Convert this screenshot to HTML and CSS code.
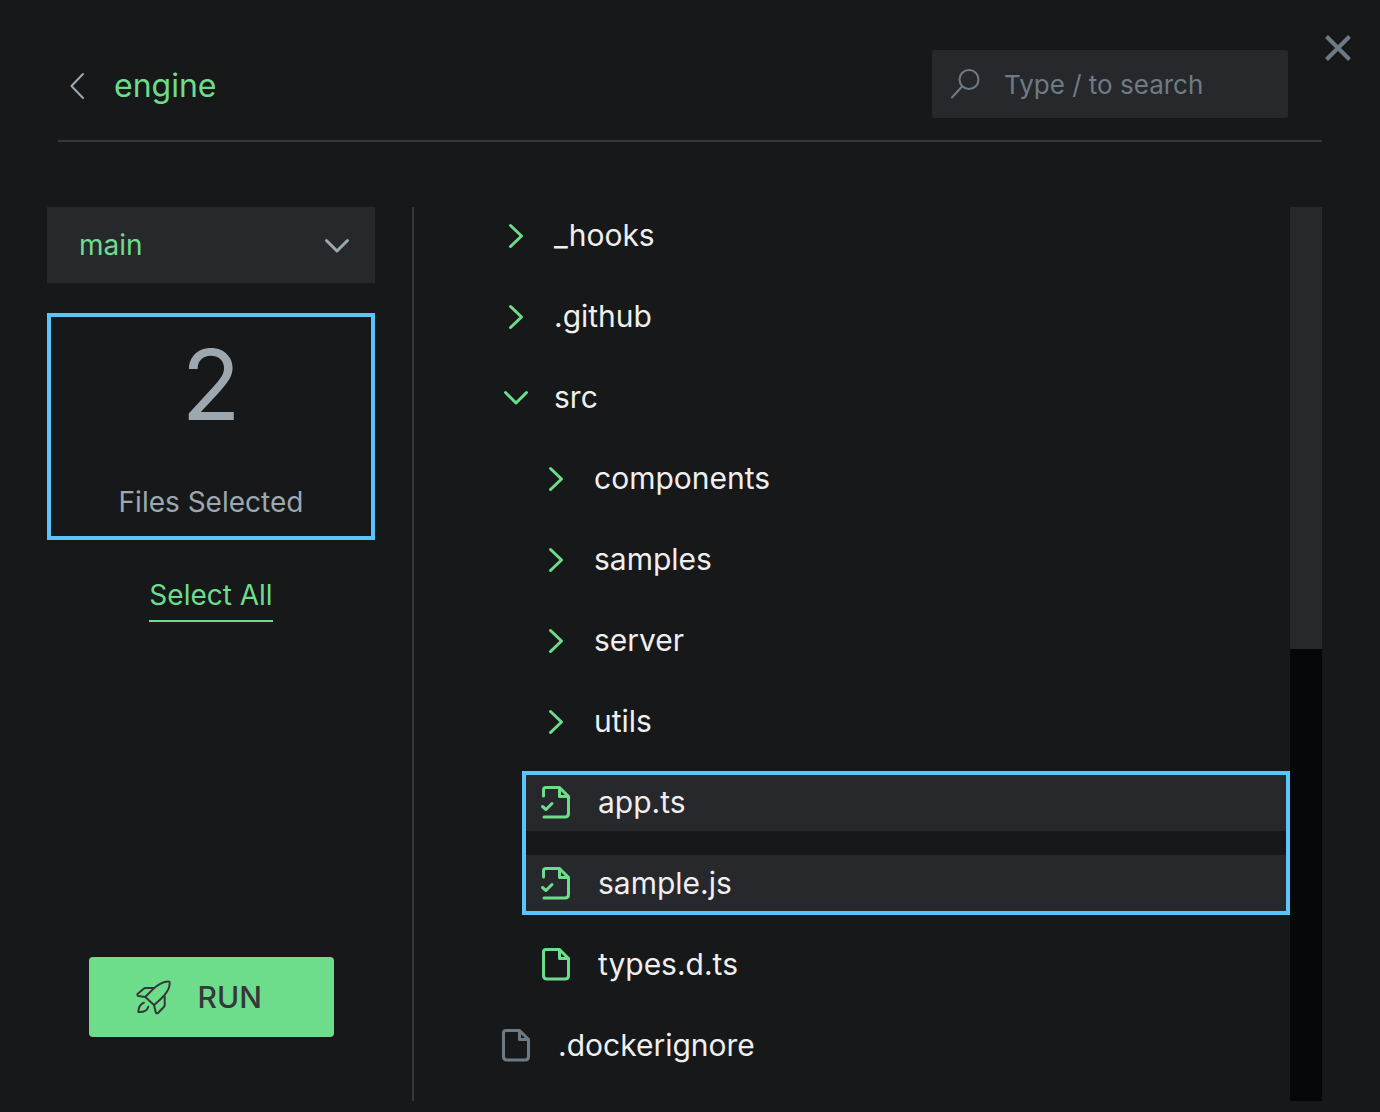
FILE: index.html
```html
<!DOCTYPE html>
<html lang="en">
<head>
<meta charset="utf-8">
<meta name="viewport" content="width=device-width, initial-scale=1">
<title>engine</title>
<link rel="stylesheet" href="styles.css">
</head>
<body>
<svg class="sprite" aria-hidden="true">
  <symbol id="right" viewBox="0 0 36 36"><path d="M12.500 8.500L23.500 19L12.500 29.500"/></symbol>
  <symbol id="down" viewBox="0 0 36 36"><path d="M7.500 13.500L18 24L28.500 13.500"/></symbol>
  <symbol id="file" viewBox="0 0 36 36"><path d="M8 3.500H21.500L30.500 12.500V29.500Q30.500 33 27 33H9Q5.500 33 5.500 29.500V6Q5.500 3.500 8 3.500Z"/><path d="M21.500 4V12.500H30.500"/></symbol>
  <symbol id="checked" viewBox="0 0 36 36"><path d="M5.500 12V6Q5.500 3.500 8 3.500H21.500L30.500 12.500V29.500Q30.500 33 27 33H6"/><path d="M21.500 4V12.500H30.500"/><path d="M4.500 22.500L8 25.500L14 19.500"/></symbol>
</svg>
<div class="dialog">
  <div class="top">
    <header class="header">
      <button class="back" aria-label="Back"><svg viewBox="0 0 36 36"><path d="M25 8L13.500 20l11.500 12"/></svg></button>
      <h1 class="title">engine</h1>
      <label class="search">
        <svg viewBox="0 0 32 32" aria-hidden="true"><circle cx="19" cy="11.500" r="9.500"/><path d="M12 18.500L2 29.500"/></svg>
        <input type="text" placeholder="Type / to search" aria-label="Search files">
      </label>
    </header>
    <button class="close" aria-label="Close"><svg viewBox="0 0 28 28"><path d="M2.500 2.500l23 23M25.500 2.500L2.500 25.500"/></svg></button>
  </div>
  <div class="body">
    <aside class="side">
      <div class="branch">
        <select aria-label="Branch"><option>main</option></select>
        <svg aria-hidden="true"><use href="#down"/></svg>
      </div>
      <div class="summary">
        <span class="count">2</span>
        <span class="caption">Files Selected</span>
      </div>
      <button class="select-all">Select All</button>
      <button class="run">
        <svg viewBox="0 0 36 36" aria-hidden="true"><path d="M9.300 18C16 11 23 3 31.500 2.500Q34 2.200 33.700 4.500C33.500 13 25 20 18 26Z"/><path d="M18 9H9.500Q8.500 9 7.700 9.700L1.500 15Q1 16.500 2.500 17L9.300 18"/><path d="M28.700 17.500V26Q28.700 27 28 27.700L22 34Q20 35 19.700 33L18 26"/><path d="M8 23.700Q2.500 26 2.300 33Q10.500 33.500 12.300 27.700"/></svg>
        <span>RUN</span>
      </button>
    </aside>
    <main class="files">
      <div class="tree">
        <button class="row"><svg><use href="#right"/></svg>_hooks</button>
        <button class="row"><svg><use href="#right"/></svg>.github</button>
        <button class="row" aria-expanded="true"><svg><use href="#down"/></svg>src</button>
        <div class="children">
          <button class="row"><svg><use href="#right"/></svg>components</button>
          <button class="row"><svg><use href="#right"/></svg>samples</button>
          <button class="row"><svg><use href="#right"/></svg>server</button>
          <button class="row"><svg><use href="#right"/></svg>utils</button>
          <div class="selection">
            <label class="row file"><input type="checkbox" checked><svg><use href="#checked"/></svg>app.ts</label>
            <label class="row file"><input type="checkbox" checked><svg><use href="#checked"/></svg>sample.js</label>
          </div>
          <label class="row file"><input type="checkbox"><svg><use href="#file"/></svg>types.d.ts</label>
        </div>
        <label class="row file muted"><input type="checkbox"><svg><use href="#file"/></svg>.dockerignore</label>
      </div>
      <div class="scrollbar" aria-hidden="true"><div class="thumb"></div></div>
    </main>
  </div>
</div>
</body>
</html>
```
FILE: styles.css
```css
:root {
  --bg: #17181a;
  --panel: #27282c;
  --green: #6ddd8b;
  --blue: #5bc4fa;
  --grey: #9da7b0;
  --dim: #6f7b84;
  --line: #363739;
}
* { box-sizing: border-box; }
body {
  margin: 0;
  background: var(--bg);
  color: #efefef;
  font-family: Inter, "Liberation Sans", sans-serif;
  font-size: 30px;
}
button, input, select {
  margin: 0;
  padding: 0;
  border: 0;
  border-radius: 0;
  background: none;
  color: inherit;
  font: inherit;
  appearance: none;
}
svg {
  flex: none;
  width: 36px;
  height: 36px;
  fill: none;
  stroke: currentColor;
  stroke-width: 3;
  stroke-linecap: round;
  stroke-linejoin: round;
}
.sprite { display: none; }
.dialog {
  display: flex;
  flex-direction: column;
  min-height: 100vh;
  padding-bottom: 11px;
}
.top { display: flex; align-items: flex-start; }
.header {
  flex: 1;
  display: flex;
  align-items: center;
  margin-left: 58px;
  padding: 50px 34px 22px 0;
  border-bottom: 2px solid var(--line);
}
.back { display: flex; color: var(--grey); }
.back svg { stroke-width: 2; }
.title {
  flex: 1;
  margin: 0;
  padding: 4px 0 0 20px;
  color: var(--green);
  font-size: 32px;
  line-height: 40px;
  font-weight: 400;
}
.search {
  display: flex;
  align-items: center;
  gap: 22px;
  width: 356px;
  height: 68px;
  padding: 0 18px;
  border-radius: 2px;
  background: var(--panel);
  color: var(--dim);
  font-size: 26px;
}
.search svg { width: 32px; height: 32px; stroke-width: 2; }
.search input { flex: 1; min-width: 0; }
.search input::placeholder { color: var(--dim); opacity: 1; }
.close {
  display: flex;
  width: 58px;
  padding: 34px 0 0 2px;
  color: var(--dim);
}
.close svg { width: 28px; height: 28px; stroke-width: 4; stroke-linecap: butt; }
.body {
  flex: 1;
  display: flex;
  margin: 65px 58px 0 47px;
}
.side {
  display: flex;
  flex-direction: column;
  align-items: center;
  width: 367px;
  padding-right: 37px;
  border-right: 2px solid var(--line);
  font-size: 28px;
}
.branch {
  display: grid;
  align-items: center;
  width: 100%;
  height: 76px;
  background: var(--panel);
  color: var(--grey);
}
.branch > * { grid-area: 1 / 1; }
.branch select { height: 100%; padding-left: 32px; color: var(--green); }
.branch svg { justify-self: end; margin-right: 20px; pointer-events: none; }
.summary {
  display: flex;
  flex-direction: column;
  align-items: center;
  justify-content: space-between;
  width: 100%;
  height: 227px;
  margin: 30px 0 34px;
  padding: 8px 0 14px;
  border: 4px solid var(--blue);
  color: var(--grey);
}
.count { font-size: 97px; line-height: 120px; }
.caption { line-height: 40px; }
.select-all {
  padding-bottom: 4px;
  border-bottom: 2px solid var(--green);
  color: var(--green);
  line-height: 42px;
}
.run {
  display: flex;
  align-items: center;
  gap: 26px;
  width: 245px;
  height: 80px;
  margin: auto 0 64px;
  padding-left: 47px;
  border-radius: 4px;
  background: var(--green);
  color: #36373a;
  font-size: 30px;
  font-weight: 500;
}
.run svg { stroke-width: 2; }
.files { flex: 1; display: flex; }
.tree {
  flex: 1;
  display: flex;
  flex-direction: column;
  gap: 24px;
  padding-left: 68px;
}
.children, .selection { display: flex; flex-direction: column; gap: 24px; }
.children { padding-left: 40px; }
.row {
  display: flex;
  align-items: center;
  gap: 20px;
  height: 57px;
  padding: 0 0 2px 16px;
}
.row svg { color: var(--green); }
.row input { width: 0; }
.file { gap: 24px; }
.file input { margin-right: -24px; }
.muted svg { color: var(--dim); }
.selection { position: relative; }
.selection .row { background: var(--panel); }
.selection::after {
  content: "";
  position: absolute;
  inset: -3px 0;
  border: 4px solid var(--blue);
  pointer-events: none;
}
.scrollbar {
  display: grid;
  grid-template-rows: 442fr 452fr;
  width: 32px;
  background: #060708;
}
.thumb { background: var(--panel); }
```
